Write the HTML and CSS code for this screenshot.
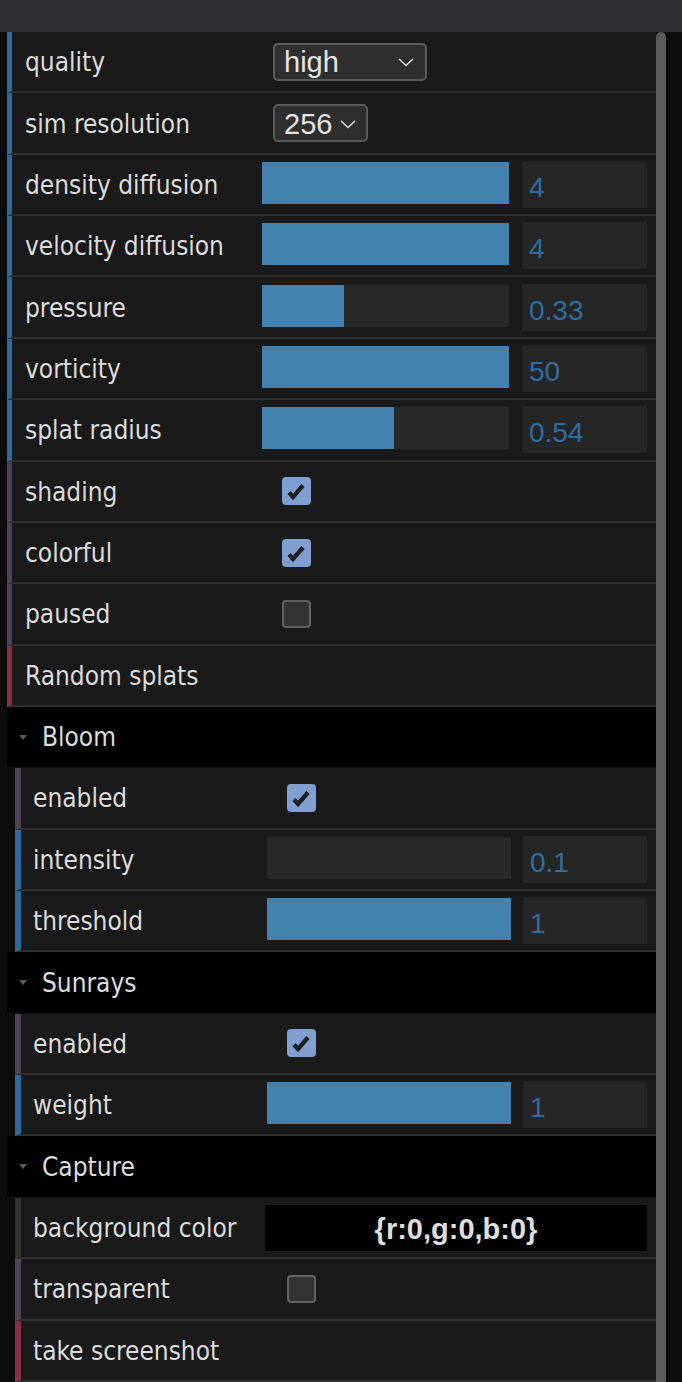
FILE: index.html
```html
<!DOCTYPE html>
<html>
<head>
<meta charset="utf-8">
<link rel="stylesheet" href="styles.css">
</head>
<body>
<div class="topbar"></div>
<div class="stage">
  <div class="gui">
    <ul class="list main">
      <li class="row num">
        <span class="label">quality</span>
        <div class="ctrl">
          <div class="select wide"><span>high</span><svg class="chev" viewBox="0 0 16 9"><path d="M1 1 L8 7.5 L15 1"/></svg></div>
        </div>
      </li>
      <li class="row num">
        <span class="label">sim resolution</span>
        <div class="ctrl">
          <div class="select narrow"><span>256</span><svg class="chev" viewBox="0 0 16 9"><path d="M1 1 L8 7.5 L15 1"/></svg></div>
        </div>
      </li>
      <li class="row num">
        <span class="label">density diffusion</span>
        <div class="ctrl"><div class="slider"><div class="fill" style="width:100%"></div></div><div class="numbox">4</div></div>
      </li>
      <li class="row num">
        <span class="label">velocity diffusion</span>
        <div class="ctrl"><div class="slider"><div class="fill" style="width:100%"></div></div><div class="numbox">4</div></div>
      </li>
      <li class="row num">
        <span class="label">pressure</span>
        <div class="ctrl"><div class="slider"><div class="fill" style="width:33%"></div></div><div class="numbox">0.33</div></div>
      </li>
      <li class="row num">
        <span class="label">vorticity</span>
        <div class="ctrl"><div class="slider"><div class="fill" style="width:100%"></div></div><div class="numbox">50</div></div>
      </li>
      <li class="row num">
        <span class="label">splat radius</span>
        <div class="ctrl"><div class="slider"><div class="fill" style="width:53.5%"></div></div><div class="numbox">0.54</div></div>
      </li>
      <li class="row bool">
        <span class="label">shading</span>
        <div class="ctrl"><div class="check on"><svg viewBox="0 0 28 28"><path d="M6.5 15.5 L10.5 20 L20.5 8.5"/></svg></div></div>
      </li>
      <li class="row bool">
        <span class="label">colorful</span>
        <div class="ctrl"><div class="check on"><svg viewBox="0 0 28 28"><path d="M6.5 15.5 L10.5 20 L20.5 8.5"/></svg></div></div>
      </li>
      <li class="row bool">
        <span class="label">paused</span>
        <div class="ctrl"><div class="check"></div></div>
      </li>
      <li class="row func">
        <span class="label">Random splats</span>
      </li>
    </ul>

    <div class="folder">
      <div class="folder-title"><span class="tri"></span>Bloom</div>
      <ul class="list sub">
        <li class="row bool">
          <span class="label">enabled</span>
          <div class="ctrl"><div class="check on"><svg viewBox="0 0 28 28"><path d="M6.5 15.5 L10.5 20 L20.5 8.5"/></svg></div></div>
        </li>
        <li class="row num">
          <span class="label">intensity</span>
          <div class="ctrl"><div class="slider"><div class="fill" style="width:0%"></div></div><div class="numbox">0.1</div></div>
        </li>
        <li class="row num">
          <span class="label">threshold</span>
          <div class="ctrl"><div class="slider"><div class="fill" style="width:100%"></div></div><div class="numbox">1</div></div>
        </li>
      </ul>
    </div>

    <div class="folder">
      <div class="folder-title"><span class="tri"></span>Sunrays</div>
      <ul class="list sub">
        <li class="row bool">
          <span class="label">enabled</span>
          <div class="ctrl"><div class="check on"><svg viewBox="0 0 28 28"><path d="M6.5 15.5 L10.5 20 L20.5 8.5"/></svg></div></div>
        </li>
        <li class="row num">
          <span class="label">weight</span>
          <div class="ctrl"><div class="slider"><div class="fill" style="width:100%"></div></div><div class="numbox">1</div></div>
        </li>
      </ul>
    </div>

    <div class="folder">
      <div class="folder-title"><span class="tri"></span>Capture</div>
      <ul class="list sub">
        <li class="row color">
          <span class="label">background color</span>
          <div class="ctrl"><div class="colorbox">{r:0,g:0,b:0}</div></div>
        </li>
        <li class="row bool">
          <span class="label">transparent</span>
          <div class="ctrl"><div class="check"></div></div>
        </li>
        <li class="row func">
          <span class="label">take screenshot</span>
        </li>
      </ul>
    </div>
  </div>
  <div class="scrollbar"></div>
</div>
</body>
</html>
```

FILE: styles.css
```css
* { box-sizing: border-box; }
html, body {
  margin: 0;
  padding: 0;
  background: #0c0c0c;
  height: 1382px;
  overflow: hidden;
}
.topbar {
  height: 32px;
  background: #2e2e33;
}
.stage {
  display: flex;
  padding-left: 7px;
  height: 1350px;
}
.gui {
  width: 649px;
  flex: 0 0 649px;
}
.scrollbar {
  width: 10px;
  flex: 0 0 10px;
  background: #5a5a5a;
  border-radius: 5px 5px 0 0;
}
.list {
  list-style: none;
  margin: 0;
  padding: 0;
}
.list.sub {
  padding-left: 8px;
}
.row {
  height: 61.36px;
  display: flex;
  align-items: center;
  background: #1a1a1a;
  border-bottom: 2px solid #2e2e2e;
  border-left: 5px solid #2c6a9b;
  padding-left: 13px;
  padding-right: 9px;
}
.sub .row {
  border-left-width: 6px;
  padding-left: 12px;
}
.row.bool { border-left-color: #4d4358; }
.row.func { border-left-color: #8c2d4a; }
.row.color { border-left-color: #333333; }
.label {
  flex: 0 0 237px;
  font-family: "DejaVu Sans Condensed", "DejaVu Sans", sans-serif;
  font-stretch: semi-condensed;
  font-size: 26px;
  color: #dcdcdc;
  white-space: nowrap;
  padding-top: 1px;
}
.sub .label { flex-basis: 234px; }
.ctrl {
  flex: 1;
  display: flex;
  align-items: flex-start;
  gap: 13px;
}
.sub .ctrl { gap: 12px; }

.slider {
  flex: 0 0 247px;
  height: 42px;
  background: #292929;
  margin-top: 1px;
}
.sub .slider { flex-basis: 244px; }
.fill {
  height: 100%;
  background: #4381af;
}
.numbox {
  flex: 1;
  height: 47px;
  background: #262626;
  color: #2d6ea3;
  font-family: "Liberation Sans", Arial, sans-serif;
  font-size: 28px;
  line-height: 47px;
  padding-left: 7px;
  padding-top: 3px;
}

.select {
  height: 38px;
  margin-left: 11px;
  background: #2f2f2f;
  border: 2px solid #5c5c5c;
  border-radius: 5px;
  display: flex;
  align-items: center;
  justify-content: space-between;
  padding: 2px 11px 0 9px;
  color: #e4e4e4;
  font-family: "Liberation Sans", Arial, sans-serif;
  font-size: 29px;
}
.select.wide { width: 154px; }
.select.narrow { width: 95px; padding-right: 10px; }
.chev {
  width: 16px;
  height: 9px;
}
.chev path {
  fill: none;
  stroke: #d8d8d8;
  stroke-width: 1.6;
}

.check {
  width: 29px;
  height: 28px;
  margin-left: 20px;
  border-radius: 4px;
  background: #333333;
  border: 2px solid #626262;
}
.check.on {
  background: #7f9fd0;
  border: none;
}
.check svg {
  display: block;
  width: 29px;
  height: 28px;
}
.check path {
  fill: none;
  stroke: #1e1e1e;
  stroke-width: 4.2;
}

.colorbox {
  flex: 1;
  margin-left: -2px;
  height: 46px;
  background: #000;
  color: #dedede;
  font-family: "Liberation Sans", Arial, sans-serif;
  font-weight: bold;
  font-size: 29px;
  line-height: 46px;
  text-align: center;
  padding-top: 1px;
}

.folder-title {
  height: 61.36px;
  display: flex;
  align-items: center;
  background: #000;
  border-bottom: 1px solid #111;
  color: #dcdcdc;
  font-family: "DejaVu Sans Condensed", "DejaVu Sans", sans-serif;
  font-stretch: semi-condensed;
  font-size: 26px;
  padding-left: 12px;
}
.tri {
  width: 0;
  height: 0;
  border-left: 4px solid transparent;
  border-right: 4px solid transparent;
  border-top: 5px solid #5a5a5a;
  margin-right: 15px;
}
```
